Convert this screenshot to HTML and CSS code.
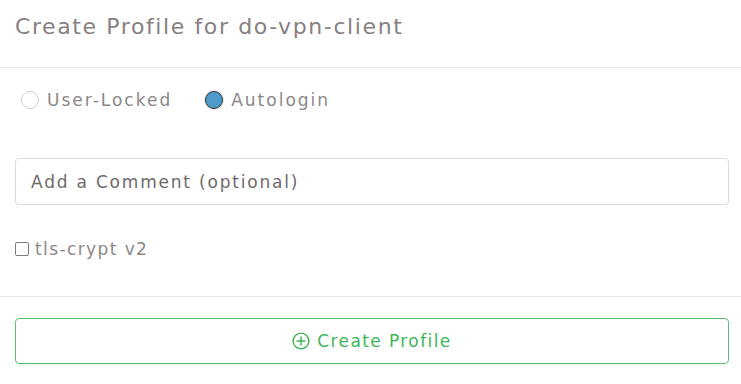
FILE: index.html
```html
<!DOCTYPE html>
<html lang="en">
<head>
<meta charset="UTF-8">
<meta name="viewport" content="width=device-width, initial-scale=1.0">
<title>Create Profile</title>
<link rel="stylesheet" href="styles.css">
</head>
<body>
<div class="card">
  <div class="card-header">
    <h5 class="card-title">Create Profile for do-vpn-client</h5>
  </div>

  <div class="card-body">
    <div class="radio-row">
      <label class="radio">
        <input type="radio" name="mode" value="locked">
        <span>User-Locked</span>
      </label>
      <label class="radio">
        <input type="radio" name="mode" value="autologin" checked>
        <span>Autologin</span>
      </label>
    </div>

    <input class="comment" type="text" placeholder="Add a Comment (optional)">

    <label class="check">
      <input type="checkbox">
      <span>tls-crypt v2</span>
    </label>
  </div>

  <div class="card-footer">
    <button class="btn-create" type="button">
      <svg class="icon" viewBox="0 0 16 16" width="18" height="18">
        <circle cx="8" cy="8" r="7" fill="none" stroke="currentColor" stroke-width="1.3"/>
        <path d="M8 4.5v7M4.5 8h7" stroke="currentColor" stroke-width="1.3" stroke-linecap="round"/>
      </svg>
      <span>Create Profile</span>
    </button>
  </div>
</div>
</body>
</html>
```

FILE: styles.css
```css
* {
  box-sizing: border-box;
  font-family: "DejaVu Sans", "Noto Sans", sans-serif;
}

body {
  margin: 0;
  padding: 0;
  background-color: #fff;
}

.card {
  width: 741px;
}

.card-header {
  height: 68px;
  padding: 12px 15px 0;
  border-bottom: 1px solid #e9e8ec;
}

.card-title {
  margin: 0;
  font-size: 22px;
  font-weight: normal;
  line-height: 30px;
  color: #877f80;
  letter-spacing: 1.6px;
}

.card-body {
  padding: 22px 12px 0 15px;
  height: 229px;
  border-bottom: 1px solid #e9e8ec;
}

.radio-row {
  display: flex;
  gap: 33px;
  padding-left: 6px;
  height: 20px;
  align-items: center;
}

.radio {
  display: flex;
  align-items: center;
  gap: 8px;
  font-size: 17px;
  letter-spacing: 2px;
  color: #8d8788;
}

.radio input {
  appearance: none;
  margin: 0;
  width: 18px;
  height: 18px;
  border: 1px solid #cfcfcf;
  border-radius: 50%;
  background: #fff;
}

.radio input:checked {
  background: #4e9acb;
  border: 1.5px solid #2f3b45;
  box-shadow: 0 0 0 1px #e2e2e2;
}

.comment {
  display: block;
  width: 100%;
  height: 47px;
  margin-top: 48px;
  padding: 0 15px;
  border: 1px solid #d9dadd;
  border-radius: 4px;
  font-size: 17px;
  letter-spacing: 1.8px;
  color: #6f6a6b;
  outline: none;
}

.comment::placeholder {
  color: #6f6a6b;
}

.check {
  display: flex;
  align-items: center;
  gap: 6px;
  margin-top: 34px;
  font-size: 17px;
  letter-spacing: 1.4px;
  color: #8d8788;
}

.check input {
  appearance: none;
  margin: 0;
  width: 14px;
  height: 14px;
  border: 1.5px solid #7c7c7c;
  border-radius: 2px;
}

.card-footer {
  padding: 21px 12px 20px 15px;
}

.btn-create {
  display: flex;
  justify-content: center;
  align-items: center;
  gap: 7px;
  width: 100%;
  height: 46px;
  background: #fff;
  border: 1px solid #5cbf6e;
  border-radius: 4px;
  font-size: 17px;
  letter-spacing: 1.4px;
  color: #3eb656;
  cursor: pointer;
}
```
